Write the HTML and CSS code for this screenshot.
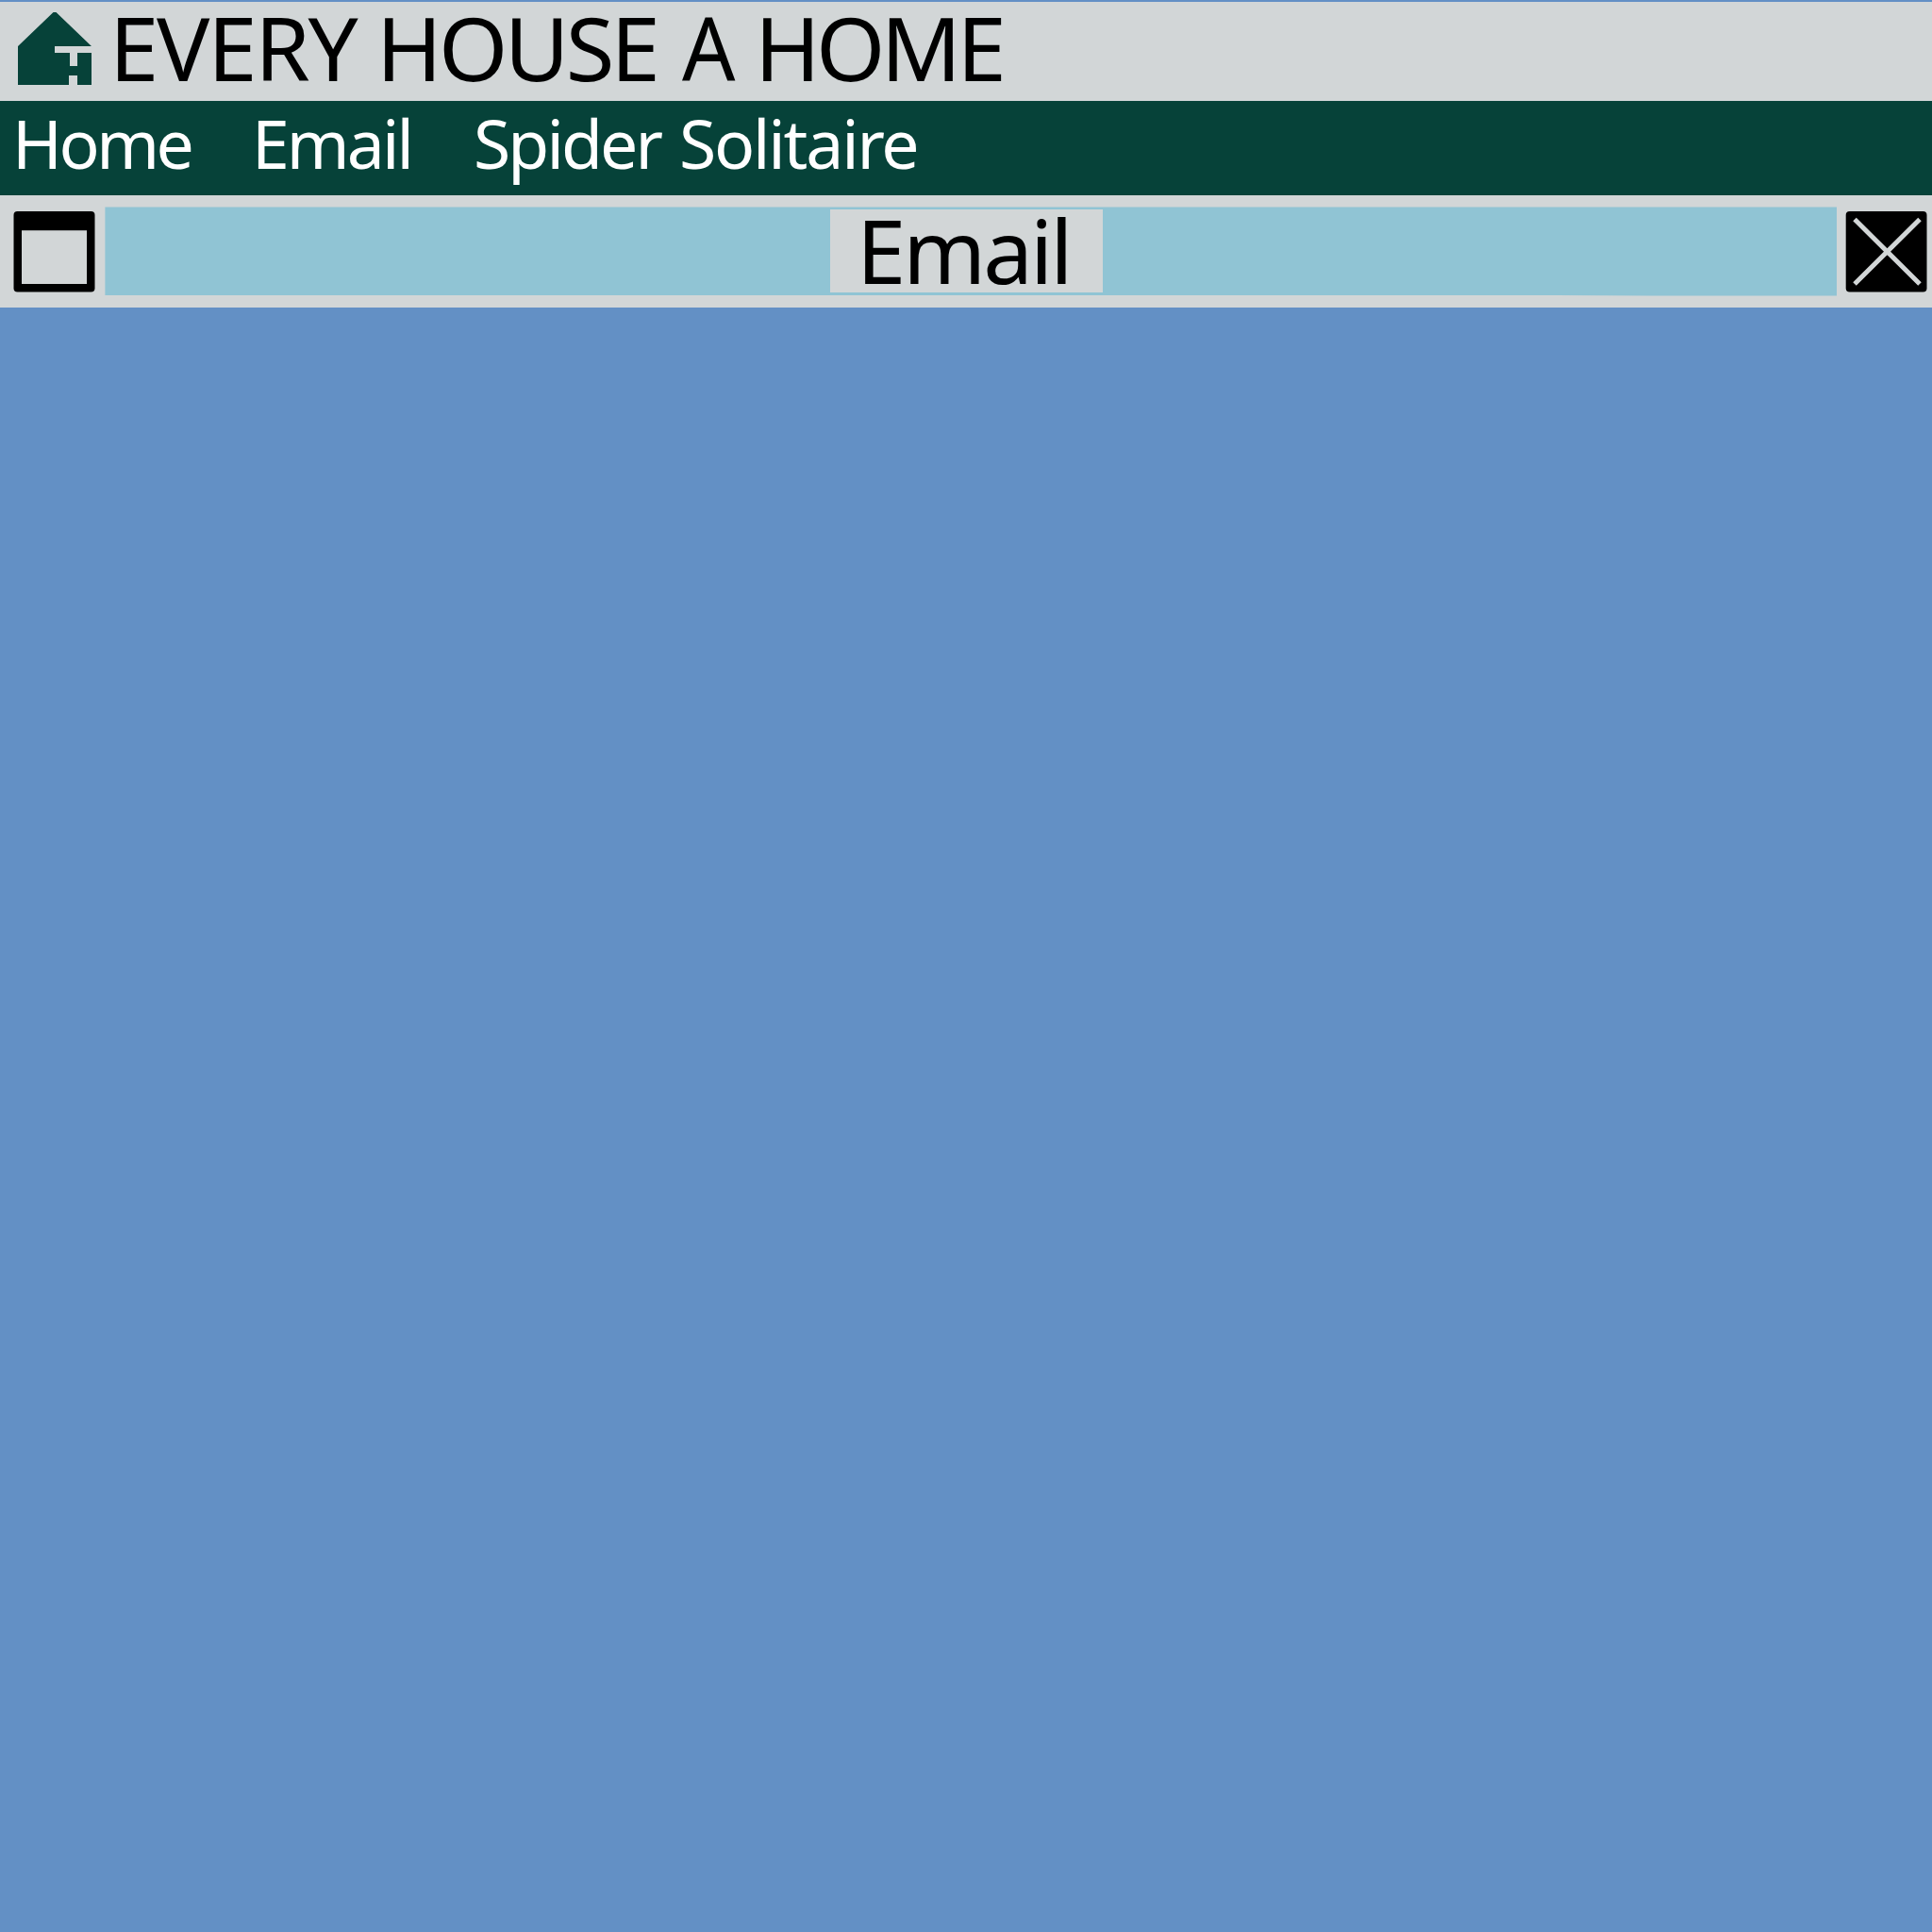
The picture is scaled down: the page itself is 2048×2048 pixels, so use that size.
FILE: index.html
```html
<!DOCTYPE html>
<html lang="en">
<head>
<meta charset="utf-8">
<title>Every House A Home</title>
<link rel="stylesheet" href="styles.css">
</head>
<body>
<header class="brand">
  <svg class="logo" width="78" height="77" viewBox="0 0 78 77" aria-hidden="true"><path d="M0 36 37.5 0h3L78 36H39v7h16v14h8V43h15v34H63V67h-9v10H0Z"/></svg>
  <h1 class="brand-name"><span class="w-every">EVERY</span> <span class="w-house">HOUSE</span> <span class="w-a">A</span> <span class="w-home">HOME</span></h1>
</header>
<nav class="menu">
  <a class="m-home">Home</a>
  <a class="m-email">Email</a>
  <a class="m-spider"><span class="w-spider">Spider</span> <span class="w-solitaire">Solitaire</span></a>
</nav>
<section class="titlebar">
  <svg class="button" width="87" height="86" viewBox="0 0 87 86" aria-hidden="true"><rect x=".5" width="86" height="85.5" rx="4"/><path class="pane" d="M9 20.3h69V77H9z"/></svg>
  <div class="track"><h2 class="window-name">Email</h2></div>
  <svg class="button close" width="87" height="86" viewBox="0 0 87 86" aria-hidden="true"><rect x=".7" width="85.8" height="85.5" rx="4"/><path class="cross" d="M10 8.5 79 77M79 8.5 10 77"/></svg>
</section>
<main class="desktop"></main>
</body>
</html>
```
FILE: styles.css
```css
* { box-sizing: border-box; }
html, body { height: 100%; }
body {
  margin: 0;
  display: flex;
  flex-direction: column;
  overflow: hidden;
  background: #6390c5;
  font-family: "Noto Sans", sans-serif;
  color: #000;
}
h1, h2 { margin: 0; font-weight: 400; }
.brand {
  flex: none;
  display: flex;
  height: 105px;
  margin-top: 2px;
  padding-left: 19px;
  background: #d2d6d7;
}
.logo { margin-top: 11px; fill: #064239; }
.brand-name {
  display: flex;
  margin-left: 19px;
  font-size: 94px;
  line-height: 97px;
  white-space: nowrap;
}
.w-every { width: 283px; letter-spacing: -2.2px; }
.w-house { width: 324px; letter-spacing: -3.7px; }
.w-a { width: 77px; transform: scaleX(.94); transform-origin: 0 0; }
.w-home { letter-spacing: -4.6px; }
.menu {
  flex: none;
  display: flex;
  height: 100px;
  padding-left: 13px;
  background: #064239;
  color: #fff;
  font-size: 71.5px;
  line-height: 89px;
  white-space: nowrap;
}
.m-home { width: 254px; letter-spacing: -3.5px; }
.m-email { width: 235px; letter-spacing: -2.9px; }
.m-spider { display: flex; }
.w-spider { width: 218px; letter-spacing: -2.9px; }
.w-solitaire { letter-spacing: -2.2px; }
.titlebar {
  flex: none;
  display: flex;
  height: 119px;
  padding: 12px 5px 0 14px;
  background: #d2d6d7;
}
.button { flex: none; margin-top: 5px; }
.pane { fill: #d2d6d7; }
.cross { fill: none; stroke: #d2d6d7; stroke-width: 5; }
.track {
  display: flex;
  justify-content: center;
  width: 1836px;
  height: 95px;
  margin: 0 9px 0 10px;
  padding-top: 3px;
  background: #90c4d4;
  clip-path: polygon(.4px .5px, 100% .5px, 100% 94.6px, 1640px 94.6px, 1540px 94px, .4px 94px);
}
.window-name {
  width: 289px;
  height: 88px;
  margin-right: 9px;
  padding-left: 28px;
  background: #d2d6d7;
  font-size: 94px;
  line-height: 87px;
  letter-spacing: -3px;
}
.desktop { flex: 1; }
```
